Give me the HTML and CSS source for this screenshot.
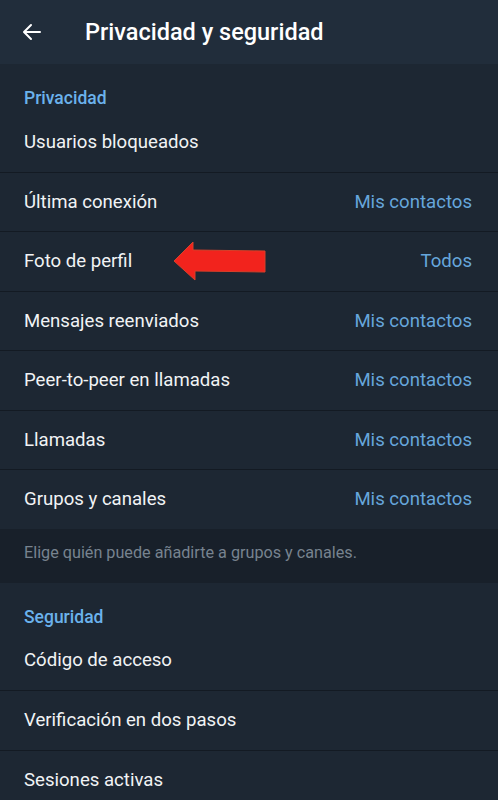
FILE: index.html
```html
<!DOCTYPE html>
<html lang="es">
<head>
  <meta charset="UTF-8">
  <title>Privacidad y seguridad</title>
  <link rel="stylesheet" href="styles.css">
</head>
<body>

  <!-- Top bar -->
  <header class="topbar">
    <svg class="back" width="24" height="24" viewBox="0 0 24 24">
      <path d="M20 12H5M11 5l-7 7 7 7" fill="none" stroke="#fff" stroke-width="2" stroke-linecap="round" stroke-linejoin="round"/>
    </svg>
    <h1>Privacidad y seguridad</h1>
  </header>

  <!-- Privacy section -->
  <section class="group">
    <h2>Privacidad</h2>
    <div class="row"><span>Usuarios bloqueados</span></div>
    <div class="row"><span>Última conexión</span><span class="value">Mis contactos</span></div>
    <div class="row">
      <span>Foto de perfil</span>
      <svg class="marker" width="100" height="44" viewBox="0 0 100 44">
        <path d="M1 21 L20 2 L20 10 L92 11 L92 32 L22 31 L22 40 Z" fill="#f2231d" stroke="#d8402a" stroke-width="1" stroke-linejoin="round"/>
      </svg>
      <span class="value">Todos</span>
    </div>
    <div class="row"><span>Mensajes reenviados</span><span class="value">Mis contactos</span></div>
    <div class="row"><span>Peer-to-peer en llamadas</span><span class="value">Mis contactos</span></div>
    <div class="row"><span>Llamadas</span><span class="value">Mis contactos</span></div>
    <div class="row"><span>Grupos y canales</span><span class="value">Mis contactos</span></div>
  </section>

  <p class="note">Elige quién puede añadirte a grupos y canales.</p>

  <!-- Security section -->
  <section class="group">
    <h2>Seguridad</h2>
    <div class="row"><span>Código de acceso</span></div>
    <div class="row"><span>Verificación en dos pasos</span></div>
    <div class="row"><span>Sesiones activas</span></div>
  </section>

</body>
</html>
```

FILE: styles.css
```css
* {
  margin: 0;
  padding: 0;
  box-sizing: border-box;
}

body {
  font-family: Roboto, 'Noto Sans', sans-serif;
  background: #1d2733;
  color: #fff;
  height: 800px;
  overflow: hidden;
}

.topbar {
  display: flex;
  align-items: center;
  height: 64px;
  padding-left: 20px;
  background: #212d3b;
}

.topbar h1 {
  margin-left: 41px;
  font-size: 23.5px;
  font-weight: 500;
}

.group {
  background: #1d2733;
}

.group h2 {
  padding: 24px 24px 0;
  height: 60px;
  font-size: 17.5px;
  font-weight: 500;
  color: #6bb2ec;
}

.row {
  position: relative;
  display: flex;
  align-items: center;
  justify-content: space-between;
  height: 59.5px;
  padding: 0 26px 0 24px;
  font-size: 18.6px;
  color: #f1f3f5;
}

.row + .row {
  border-top: 1px solid #131a23;
}

.row:first-of-type {
  margin-top: -12px;
}

.value {
  color: #66a6dc;
}

.marker {
  position: absolute;
  left: 173px;
  top: 8px;
}

.note {
  height: 54px;
  padding: 14px 24px 0;
  background: #18202a;
  font-size: 16.2px;
  color: #77838f;
}
```
